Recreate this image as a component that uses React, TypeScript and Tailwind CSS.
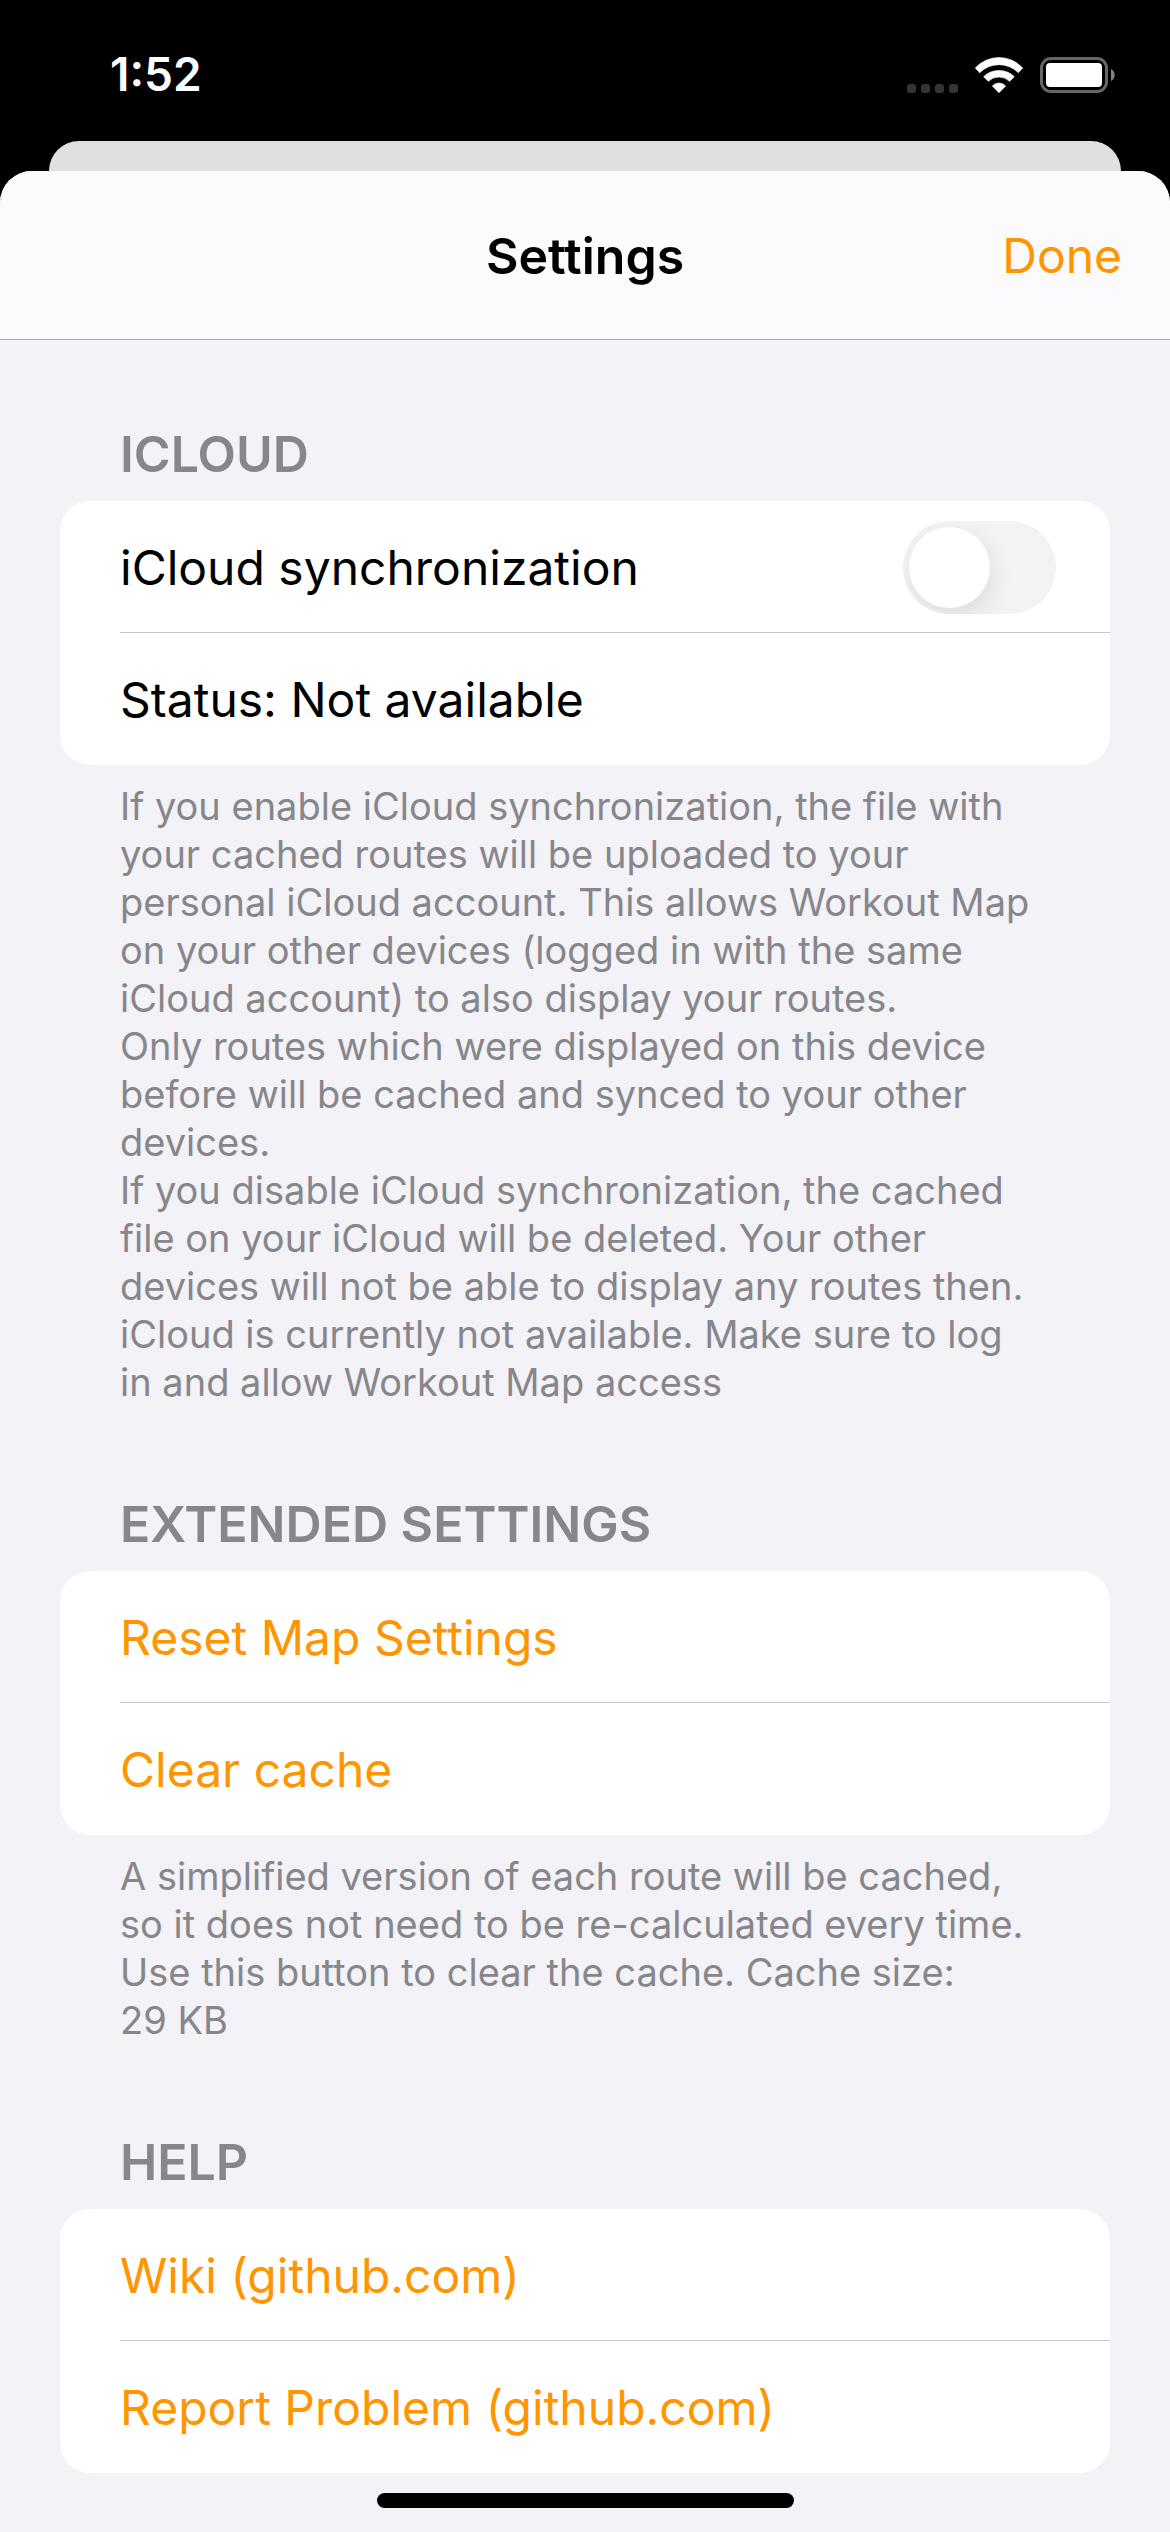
import { useState } from "react";
import type { ReactNode } from "react";

function SignalDots() {
  return (
    <svg className="h-9 w-[51px]" viewBox="0 0 51 36" role="img" aria-label="No signal">
      {[0, 14, 28, 42].map((x) => (
        <rect key={x} x={x} y="27" width="9" height="9" rx="3" fill="#343434" />
      ))}
    </svg>
  );
}

function WifiIcon() {
  return (
    <svg
      className="h-9 w-12"
      viewBox="255 45 144 108"
      fill="#fff"
      stroke="#fff"
      strokeWidth="2"
      strokeLinejoin="round"
      role="img"
      aria-label="Wi-Fi"
    >
      <path d="M256 78A96 96 0 0 1 398 78L385 92A82 82 0 0 0 269 92Z" />
      <path d="M281 104A66 66 0 0 1 373 104L359 118A46 46 0 0 0 295 118Z" />
      <path d="M307 132A27 27 0 0 1 347 132L327 152Z" />
    </svg>
  );
}

function BatteryIcon() {
  return (
    <svg className="h-9 w-[75px]" viewBox="0 0 75 36" role="img" aria-label="Battery full">
      <rect x="1.5" y="1.5" width="65" height="33" rx="9.5" fill="none" stroke="#666" strokeWidth="3" />
      <rect x="6" y="6" width="56" height="24" rx="4" fill="#fff" />
      <path d="M71 12C76 14 76 22 71 24Z" fill="#808080" />
    </svg>
  );
}

function StatusBar() {
  return (
    <div className="flex h-[141px] items-center justify-between pt-2 pr-[55px] pl-[110px]">
      <time className="text-[46px] font-semibold text-white">1:52</time>
      <div className="flex items-center gap-[17px]">
        <SignalDots />
        <WifiIcon />
        <BatteryIcon />
      </div>
    </div>
  );
}

function Section({ title, footer, children }: { title: string; footer?: ReactNode; children: ReactNode }) {
  return (
    <section>
      <h2 className="px-[60px] pb-3.5 text-[50px] leading-[66px] font-semibold text-[#86868b] uppercase">{title}</h2>
      <div className="overflow-hidden rounded-[30px] bg-white">{children}</div>
      {footer && <div className="pt-[17px] pr-[72px] pl-[60px] text-[38px] leading-[48px] text-[#86868b]">{footer}</div>}
    </section>
  );
}

const rowText = "ml-[60px] flex h-[132px] w-[calc(100%-60px)] items-center pt-0.5 text-left text-[48px]";
const divider = "border-b border-[#c6c6c8]";

export default function App() {
  const [sync, setSync] = useState(false);
  return (
    <div className="flex min-h-screen flex-col bg-black font-['Inter',sans-serif]">
      <StatusBar />
      <div className="mx-[49px] h-[30px] rounded-t-[30px] bg-[#e0e0e0]" />
      <div className="flex grow flex-col overflow-hidden rounded-t-[32px] bg-[#f2f2f7]">
        <header className="grid h-[169px] grid-cols-[1fr_auto_1fr] items-center border-b border-[#a9a9ad] bg-[#fbfbfd] px-12 pt-0.5">
          <h1 className="col-start-2 text-[50px] font-semibold text-black">Settings</h1>
          <button type="button" className="justify-self-end text-[48px] text-[#ff9500]">
            Done
          </button>
        </header>

        <main className="flex grow flex-col gap-[85px] px-[60px] pt-[81px]">
          <Section
            title="iCloud"
            footer={
              <>
                <p>
                  If you enable iCloud synchronization, the file with your cached routes will be uploaded to your personal iCloud account. This allows
                  Workout Map on your other devices (logged in with the same iCloud account) to also display your routes.
                </p>
                <p>Only routes which were displayed on this device before will be cached and synced to your other devices.</p>
                <p>
                  If you disable iCloud synchronization, the cached file on your iCloud will be deleted. Your other devices will not be able to display
                  any routes then.
                </p>
                <p>iCloud is currently not available. Make sure to log in and allow Workout Map access</p>
              </>
            }
          >
            <label className={`${rowText} ${divider} justify-between pr-[54px]`}>
              iCloud synchronization
              <input
                type="checkbox"
                role="switch"
                checked={sync}
                onChange={(e) => setSync(e.target.checked)}
                className="flex h-[93px] w-[153px] appearance-none overflow-hidden rounded-full bg-[#f3f3f3] p-1.5 before:size-[81px] before:rounded-full before:bg-white before:shadow-[3px_9px_24px_rgba(0,0,0,0.09)] checked:bg-[#34c759] checked:before:ml-[60px]"
              />
            </label>
            <p className={rowText}>Status: Not available</p>
          </Section>

          <Section
            title="Extended Settings"
            footer={
              <p>
                A simplified version of each route will be cached, so it does not need to be re-calculated every time. Use this button to clear the
                cache. Cache size: 29&nbsp;KB
              </p>
            }
          >
            <button type="button" className={`${rowText} ${divider} text-[#ff9500]`}>
              Reset Map Settings
            </button>
            <button type="button" className={`${rowText} text-[#ff9500]`}>
              Clear cache
            </button>
          </Section>

          <Section title="Help">
            <a href="#wiki" className={`${rowText} ${divider} text-[#ff9500]`}>
              Wiki (github.com)
            </a>
            <a href="#report-problem" className={`${rowText} text-[#ff9500]`}>
              Report Problem (github.com)
            </a>
          </Section>
        </main>

        <div className="mt-[19px] mb-6 h-[15px] w-[417px] self-center rounded-full bg-black" />
      </div>
    </div>
  );
}
